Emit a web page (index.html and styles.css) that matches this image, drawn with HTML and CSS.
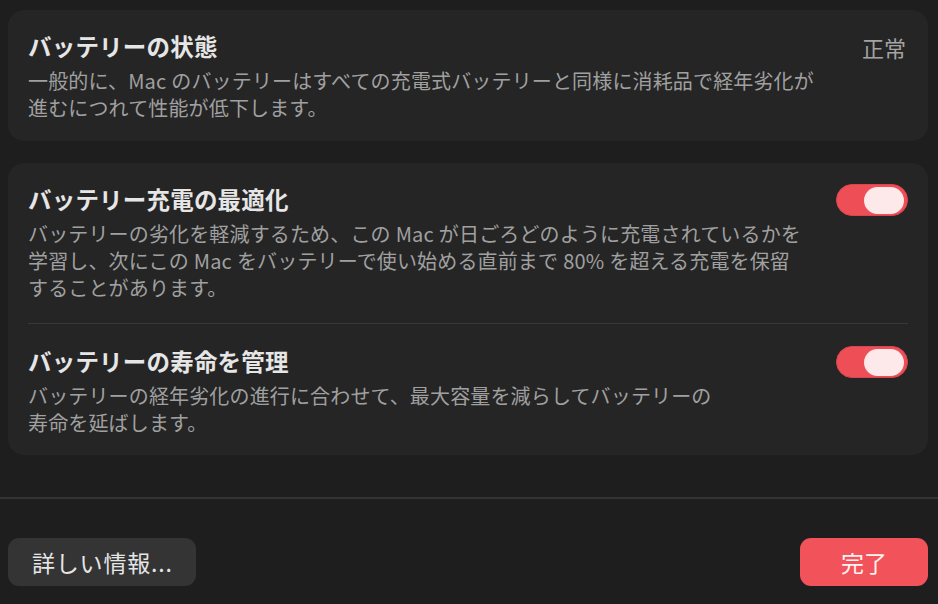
FILE: index.html
```html
<!DOCTYPE html>
<html lang="ja">
<head>
<meta charset="utf-8">
<title>バッテリー</title>
<link rel="stylesheet" href="styles.css">
</head>
<body>
<div class="sheet">
  <div class="content">
    <section class="card">
      <div class="row">
        <div class="text">
          <div class="title">バッテリーの状態</div>
          <div class="desc">一般的に、<span class="en end">Mac</span>のバッテリーはすべての充電式バッテリーと同様に消耗品で経年劣化が<br>進むにつれて性能が低下します。</div>
        </div>
        <div class="value">正常</div>
      </div>
    </section>
    <section class="card">
      <div class="row first">
        <div class="text">
          <div class="title">バッテリー充電の最適化</div>
          <div class="desc">バッテリーの劣化を軽減するため、この<span class="en">Mac</span>が日ごろどのように充電されているかを<br>学習し、次にこの<span class="en">Mac</span>をバッテリーで使い始める直前まで<span class="en">80%</span>を超える充電を保留<br>することがあります。</div>
        </div>
        <div class="toggle on"><span class="knob"></span></div>
      </div>
      <div class="row divided">
        <div class="text">
          <div class="title">バッテリーの寿命を管理</div>
          <div class="desc">バッテリーの経年劣化の進行に合わせて、最大容量を減らしてバッテリーの<br>寿命を延ばします。</div>
        </div>
        <div class="toggle on"><span class="knob"></span></div>
      </div>
    </section>
  </div>
  <footer class="footer">
    <button class="btn secondary">詳しい情報...</button>
    <button class="btn primary">完了</button>
  </footer>
</div>
</body>
</html>
```
FILE: styles.css
```css
html, body {
  margin: 0;
  padding: 0;
  background: #1e1e1e;
}
body {
  width: 938px;
  height: 604px;
  overflow: hidden;
  font-family: "Noto Sans CJK JP", "Noto Sans", sans-serif;
  color: #e4e4e4;
}
.sheet {
  display: flex;
  flex-direction: column;
  height: 604px;
}
.content {
  display: flex;
  flex-direction: column;
  gap: 22px;
  padding: 10px 10px 42px 8px;
  border-bottom: 2px solid #333333;
}
.card {
  background: #252525;
  border-radius: 16px;
  padding: 0 20px;
}
.row {
  display: flex;
  align-items: flex-start;
  justify-content: space-between;
  padding: 21px 0 20px;
}
.row.first {
  padding-bottom: 22px;
}
.row.divided {
  border-top: 1px solid #383838;
  padding-top: 22px;
  padding-bottom: 19px;
}
.text {
  display: flex;
  flex-direction: column;
  gap: 6px;
}
.title {
  font-size: 23.5px;
  line-height: 30px;
  font-weight: 600;
  color: #e6e6e6;
  letter-spacing: 0.2px;
}
.desc {
  font-size: 20px;
  line-height: 27px;
  color: #a0a0a0;
  letter-spacing: 0.15px;
}
.en {
  margin: 0 5px;
}
.en.end {
  margin-left: 0;
}
.value {
  font-size: 22px;
  line-height: 30px;
  color: #a3a3a3;
  margin-top: 1px;
  margin-right: 2px;
}
.toggle {
  width: 72px;
  height: 32px;
  border-radius: 16px;
  background: #ee4f57;
  box-sizing: border-box;
  border: 1px solid #d94550;
  display: flex;
  align-items: center;
  justify-content: flex-end;
  padding: 0 3px;
  flex-shrink: 0;
}
.knob {
  width: 40px;
  height: 27px;
  border-radius: 14px;
  background: #fde9ea;
}
.footer {
  display: flex;
  justify-content: space-between;
  align-items: center;
  padding: 39px 10px 18px 8px;
}
.btn {
  height: 48px;
  border: none;
  border-radius: 11px;
  font-family: "Noto Sans CJK JP", "Noto Sans", sans-serif;
  font-size: 23px;
  padding: 0 24px;
  line-height: 48px;
}
.btn.secondary {
  background: #343434;
  color: #e6e6e6;
  letter-spacing: 0.8px;
  padding: 0 23px 0 24px;
}
.btn.primary {
  width: 128px;
  background: #f2525a;
  color: #fdf2f2;
}
```
